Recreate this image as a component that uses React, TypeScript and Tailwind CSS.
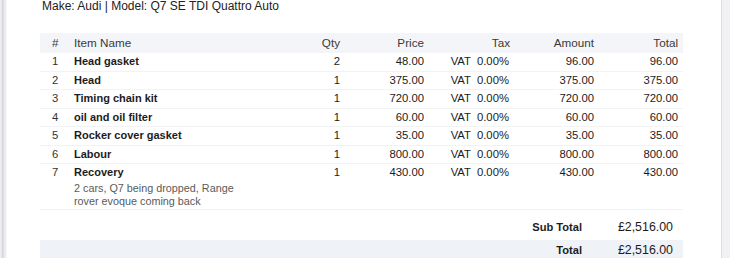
import React from "react";

const rows = [
  { n: 1, name: "Head gasket", qty: 2, price: "48.00", amount: "96.00", total: "96.00" },
  { n: 2, name: "Head", qty: 1, price: "375.00", amount: "375.00", total: "375.00" },
  { n: 3, name: "Timing chain kit", qty: 1, price: "720.00", amount: "720.00", total: "720.00" },
  { n: 4, name: "oil and oil filter", qty: 1, price: "60.00", amount: "60.00", total: "60.00" },
  { n: 5, name: "Rocker cover gasket", qty: 1, price: "35.00", amount: "35.00", total: "35.00" },
  { n: 6, name: "Labour", qty: 1, price: "800.00", amount: "800.00", total: "800.00" },
  {
    n: 7,
    name: "Recovery",
    qty: 1,
    price: "430.00",
    amount: "430.00",
    total: "430.00",
    desc: "2 cars, Q7 being dropped, Range rover evoque coming back",
  },
];

export default function App() {
  return (
    <div
      className="flex h-[258px] w-[730px] overflow-hidden bg-white text-[#1c1c1c]"
      style={{ fontFamily: '"Liberation Sans", Arial, sans-serif' }}
    >
      <div className="flex h-full w-[7px] shrink-0">
        <div className="w-[2px] bg-[#ececef]" />
        <div className="w-[1px] bg-[#d6d6da]" />
        <div className="w-[1px] bg-[#dedee2]" />
        <div className="w-[2px] bg-[#ececef]" />
        <div className="w-[1px] bg-[#f6f6f8]" />
      </div>

      <div className="flex-1 pl-[33px]">
        <div className="-mt-px pl-[2px] text-[12px] leading-[14px] text-[#222]">
          Make: Audi | Model: Q7 SE TDI Quattro Auto
        </div>

        <div className="mt-[20px] w-[643px]">
          <div className="flex h-[20px] items-center bg-[#f3f5f8] pb-px text-[11.7px] text-[#3a3a3a]">
            <div className="w-[34px] shrink-0 pl-[12px]">#</div>
            <div className="w-[226px] shrink-0">Item Name</div>
            <div className="w-[40px] shrink-0 text-right">Qty</div>
            <div className="w-[84px] shrink-0 text-right">Price</div>
            <div className="w-[86px] shrink-0 text-right">Tax</div>
            <div className="w-[84px] shrink-0 text-right">Amount</div>
            <div className="w-[84px] shrink-0 text-right">Total</div>
          </div>

          {rows.map((r) => (
            <div
              key={r.n}
              className="flex border-b border-[#f2f3f5] text-[11.3px] leading-[17.5px] text-[#1c1c1c]"
            >
              <div className="w-[34px] shrink-0 pl-[12px] text-[#333]">{r.n}</div>
              <div className="w-[226px] shrink-0">
                <div className="text-[11px] font-bold">{r.name}</div>
                {r.desc && (
                  <div className="w-[168px] text-[10.8px] leading-[13.5px] text-[#5a5a5a]">{r.desc}</div>
                )}
              </div>
              <div className="w-[40px] shrink-0 text-right">{r.qty}</div>
              <div className="w-[84px] shrink-0 text-right">{r.price}</div>
              <div className="flex w-[86px] shrink-0 justify-end gap-[6px] pr-[1px]">
                <span>VAT</span>
                <span>0.00%</span>
              </div>
              <div className="w-[84px] shrink-0 text-right">{r.amount}</div>
              <div className="w-[84px] shrink-0 text-right">{r.total}</div>
            </div>
          ))}

          <div className="mt-[8px] flex h-[20px] items-center">
            <div className="flex-1 text-right text-[11.1px] font-bold">Sub Total</div>
            <div className="w-[91px] shrink-0 text-right text-[12.4px]">£2,516.00</div>
            <div className="w-[10px] shrink-0" />
          </div>
          <div className="mt-[2px] flex h-[22px] items-center bg-[#eff2f6]">
            <div className="flex-1 text-right text-[11.1px] font-bold">Total</div>
            <div className="w-[91px] shrink-0 text-right text-[12.4px]">£2,516.00</div>
            <div className="w-[10px] shrink-0" />
          </div>
        </div>
      </div>

      <div className="h-full w-[9px] shrink-0 border-l border-[#dedee1] bg-[#f1f1f3]" />
    </div>
  );
}
